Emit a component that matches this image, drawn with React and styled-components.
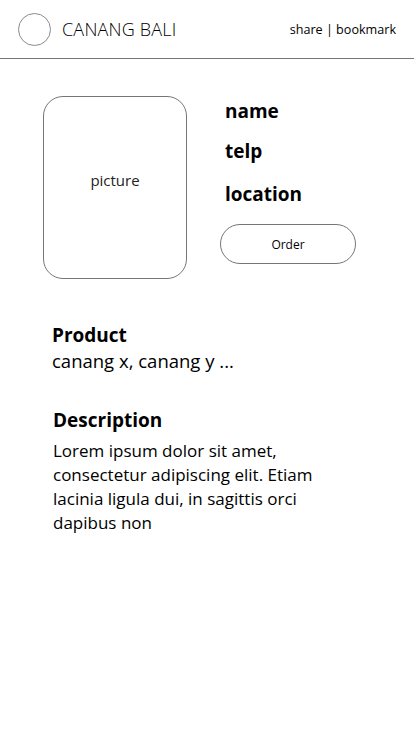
import React from "react";
import styled, { createGlobalStyle } from "styled-components";

const GlobalStyle = createGlobalStyle`
    body {
        margin: 0;
        background: #fff;
        font-family: "Open Sans", "Noto Sans", sans-serif;
        color: #000;
    }
`;

const Page = styled.div`
    width: 414px;
    min-height: 736px;
`;

const Header = styled.header`
    display: flex;
    align-items: center;
    height: 58px;
    padding: 0 18px;
    border-bottom: 1px solid #767676;
`;

const Logo = styled.div`
    width: 31px;
    height: 31px;
    border: 1px solid #8a8a8a;
    border-radius: 50%;
`;

const Title = styled.div`
    margin-left: 11px;
    font-size: 18px;
    font-weight: 300;
    letter-spacing: 0.2px;
`;

const Links = styled.div`
    margin-left: auto;
    font-size: 12.6px;
`;

const Top = styled.section`
    display: flex;
    padding: 37px 0 0 43px;
`;

const Picture = styled.div`
    display: flex;
    align-items: center;
    justify-content: center;
    box-sizing: border-box;
    width: 144px;
    height: 183px;
    padding-bottom: 16px;
    border: 1px solid #767676;
    border-radius: 20px;
    font-size: 15px;
    font-weight: 400;
    color: #222;
`;

const Info = styled.div`
    display: flex;
    flex-direction: column;
    margin-left: 33px;
    padding-top: 3px;
`;

const Field = styled.div`
    font-size: 19px;
    font-weight: 700;
    line-height: 24px;
    margin-left: 5px;
    margin-bottom: ${p => p.gap}px;
`;

const OrderButton = styled.button`
    width: 136px;
    height: 40px;
    border: 1px solid #767676;
    border-radius: 20px;
    background: #fff;
    font-family: inherit;
    font-size: 12px;
    font-weight: 400;
    color: #000;
`;

const Block = styled.section`
    padding: ${p => p.top}px 0 0 ${p => p.left}px;
    width: 280px;
`;

const Heading = styled.div`
    font-size: 19px;
    font-weight: 700;
    line-height: 26px;
`;

const Text = styled.div`
    margin-top: ${p => p.offset || 0}px;
    font-size: ${p => p.size}px;
    line-height: 24px;
`;

export default function App() {
    return (
        <Page>
            <GlobalStyle />
            <Header>
                <Logo />
                <Title>CANANG BALI</Title>
                <Links>share | bookmark</Links>
            </Header>
            <Top>
                <Picture>picture</Picture>
                <Info>
                    <Field gap={16}>name</Field>
                    <Field gap={19}>telp</Field>
                    <Field gap={18}>location</Field>
                    <OrderButton>Order</OrderButton>
                </Info>
            </Top>
            <Block top={43} left={52}>
                <Heading>Product</Heading>
                <Text size={18.5} offset={1}>canang x, canang y ...</Text>
            </Block>
            <Block top={34} left={53}>
                <Heading>Description</Heading>
                <Text size={17} offset={6}>
                    Lorem ipsum dolor sit amet, consectetur adipiscing elit. Etiam lacinia ligula dui, in sagittis orci dapibus non
                </Text>
            </Block>
        </Page>
    );
}
